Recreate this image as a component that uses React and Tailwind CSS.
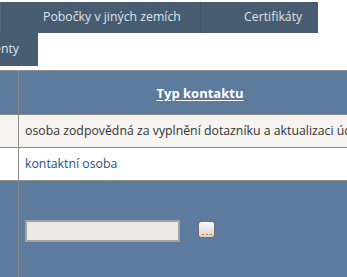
export default function App() {
  const font = { fontFamily: '"Open Sans", "DejaVu Sans", sans-serif' };
  return (
    <div className="w-[347px] h-[277px] overflow-hidden bg-white text-[12.3px]" style={font}>
      {/* top menu */}
      <div className="pt-[2px]">
        <div className="flex w-[318px] h-[31px] bg-[#475c70] text-[#dce6ef]">
          <div className="w-[1px] border-r border-[#54697d]"></div>
          <div className="w-[199px] flex items-center pl-[42px] whitespace-nowrap">Pobočky v jiných zemích</div>
          <div className="flex-1 flex items-center pl-[43px] border-l border-[#3f5366] whitespace-nowrap">Certifikáty</div>
        </div>
        <div className="flex">
          <div className="w-[38px] h-[33px] bg-[#475c70] text-[#dce6ef] overflow-hidden flex items-center justify-end pr-[19px] whitespace-nowrap">
            Dokumenty
          </div>
        </div>
      </div>

      {/* table */}
      <div className="mt-[4px] w-[381px] border-t border-[#8c8c8c]">
        <div className="flex h-[44px] bg-[#5d7b9c] border-b border-[#8c8c8c]">
          <div className="w-[19px] border-r border-[#8c8c8c]"></div>
          <div className="flex-1 flex items-center justify-center pt-[3px] text-[13px] text-white font-bold underline underline-offset-2">
            Typ kontaktu
          </div>
        </div>
        <div className="flex h-[33px] bg-[#f5f4f0] border-b border-[#8c8c8c] text-[#333]">
          <div className="w-[19px] border-r border-[#8c8c8c]"></div>
          <div className="flex-1 flex items-center pl-[6px] whitespace-nowrap">
            osoba zodpovědná za vyplnění dotazníku a aktualizaci údajů
          </div>
        </div>
        <div className="flex h-[33px] bg-white border-b border-[#8c8c8c] text-[#1f4f8c]">
          <div className="w-[19px] border-r border-[#8c8c8c]"></div>
          <div className="flex-1 flex items-center pl-[6px] whitespace-nowrap">kontaktní osoba</div>
        </div>
        <div className="flex h-[100px] bg-[#5d7b9c]">
          <div className="w-[19px] border-r border-[#8c8c8c]"></div>
          <div className="flex-1 flex items-start pt-[39px] pl-[6px]">
            <input
              type="text"
              className="w-[155px] h-[22px] bg-[#eae9e3] border-2 border-[#a3a3a6] outline-none"
            />
            <button className="ml-[18px] mt-[1px] w-[17px] h-[17px] rounded-[3px] border border-[#6f6f6f] bg-gradient-to-b from-[#fafafa] to-[#d4d4d4] flex items-end justify-center pb-[2px]">
              <span className="flex gap-[2px]">
                <span className="w-[2px] h-[1px] bg-[#e0701a]"></span>
                <span className="w-[2px] h-[1px] bg-[#e0701a]"></span>
                <span className="w-[2px] h-[1px] bg-[#e0701a]"></span>
              </span>
            </button>
          </div>
        </div>
      </div>
    </div>
  );
}
